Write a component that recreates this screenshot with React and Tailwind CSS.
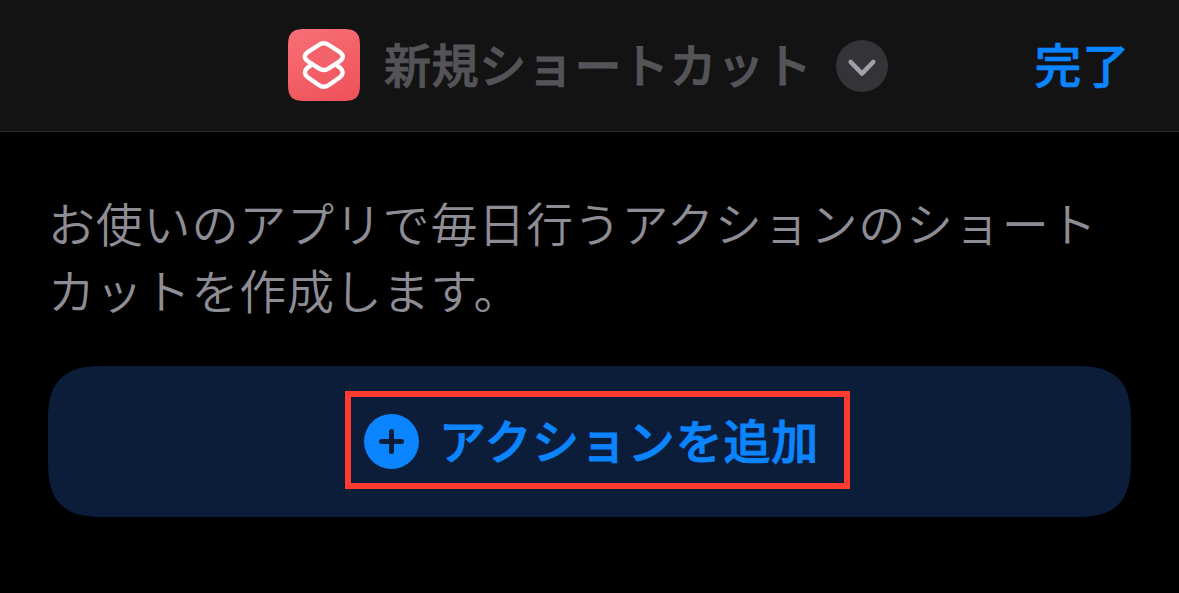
import React from 'react';

function ShortcutsLogo() {
    return (
        <svg className="w-[72px] h-[72px] shrink-0" viewBox="0 0 72 72" fill="none">
            <defs>
                <linearGradient id="logoFill" x1="20" y1="0" x2="52" y2="72" gradientUnits="userSpaceOnUse">
                    <stop stopColor="#f76d74" />
                    <stop offset="1" stopColor="#ef535b" />
                </linearGradient>
            </defs>
            <path d="M0 17C0 4 4 0 17 0H55C68 0 72 4 72 17V55C72 68 68 72 55 72H17C4 72 0 68 0 55Z" fill="url(#logoFill)" />
            <g stroke="#fff" strokeWidth="4.4" strokeLinejoin="round">
                <path d="M24 35.5L19.6 38.6Q14.2 43.4 19.6 48.2L30.8 56Q35.8 59.6 40.8 56L52 48.2Q57.4 43.4 52 38.6L47.6 35.5" />
                <path d="M30.8 16Q35.8 12.4 40.8 16L52 23.2Q57.6 27.6 52 32L40.8 39.4Q35.8 42.8 30.8 39.4L19.6 32Q14 27.6 19.6 23.2Z" fill="#f3626a" />
            </g>
        </svg>
    );
}

export default function App() {
    return (
        <div className="w-[1179px] h-[593px] bg-black overflow-hidden tracking-[0.8px] font-['Inter','Noto_Sans_CJK_JP',sans-serif]">
            {/* Navigation bar */}
            <header className="h-[132px] flex items-center bg-[#131313] border-b border-[#2b2b2c] pl-72 pr-[49px] pb-px">
                <ShortcutsLogo />
                <h1 className="ml-6 pt-0.5 text-[47px] leading-[68px] font-medium [-webkit-text-stroke:0.9px] tracking-[0.6px] text-[#545458] whitespace-nowrap">新規ショートカット</h1>
                <button className="ml-6 mt-0.5 w-[52px] h-[52px] shrink-0 rounded-full bg-[#343338]">
                    <svg className="w-[52px] h-[52px]" viewBox="0 0 52 52" fill="none" stroke="#a1a0a9" strokeWidth="4.6" strokeLinecap="round" strokeLinejoin="round">
                        <path d="M14.7 22L26 33.6L37.2 22" />
                    </svg>
                </button>
                <button className="ml-auto pt-0.5 text-[47px] leading-[68px] font-medium [-webkit-text-stroke:0.6px] text-[#0a84ff] whitespace-nowrap">完了</button>
            </header>

            <main className="px-12 pt-[59px]">
                <p className="text-[47px] leading-[67px] font-[350] text-[#8e8d95] whitespace-nowrap">
                    お使いのアプリで毎日行うアクションのショート<br />
                    カットを作成します。
                </p>

                <button className="mt-[41px] w-[1083px] h-[151px] flex items-center justify-center rounded-[44px] supports-[corner-shape:squircle]:rounded-[58px] [corner-shape:superellipse(1.5)] bg-[#0c1d3a] pl-4 pb-[3px]">
                    <span className="w-[505px] h-[98px] flex items-center border-[6px] border-[#ff3a30] pl-[13px] pt-[3px] text-[#0a84ff]">
                        <svg className="w-[55px] h-[55px] shrink-0" viewBox="0 0 55 55">
                            <circle cx="27.5" cy="27.5" r="27.5" fill="currentColor" />
                            <path d="M27.5 17.5V37.5M17.5 27.5H37.5" stroke="#0c1d3a" strokeWidth="5" strokeLinecap="round" />
                        </svg>
                        <span className="ml-5 text-[47px] leading-[68px] font-medium [-webkit-text-stroke:0.9px] whitespace-nowrap">アクションを追加</span>
                    </span>
                </button>
            </main>
        </div>
    );
}
